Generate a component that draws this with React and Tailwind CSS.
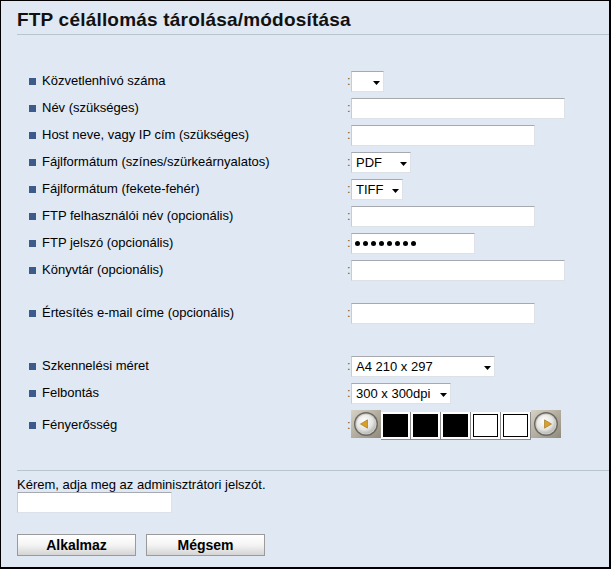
import React from 'react';

const Bullet = () => <span className="mt-[5px] w-[7px] h-[7px] shrink-0 bg-[#3c5a8a]" />;

const TextBox = ({ w, children }) => (
  <div
    className="mt-[3px] h-[21px] bg-white border border-[#dde2e8] border-t-[#a6a9ae] border-l-[#c9cdd2] flex items-center"
    style={{ width: w }}
  >
    {children}
  </div>
);

const Select = ({ w, value }) => (
  <div
    className="mt-[3px] h-[21px] bg-white border border-[#dde2e8] border-t-[#a6a9ae] border-l-[#c9cdd2] flex items-center justify-between pl-[4px] pr-[3px] text-[13px] leading-[19px]"
    style={{ width: w }}
  >
    <span>{value}</span>
    <svg width="7" height="4" viewBox="0 0 7 4" className="mt-[2px]">
      <path d="M0 0 H7 L3.5 4 Z" fill="#000" />
    </svg>
  </div>
);

const Password = () => (
  <TextBox w={124}>
    <div className="flex gap-[3px] pl-[3px]">
      {[0, 1, 2, 3, 4, 5, 6, 7].map(i => (
        <span key={i} className="w-[5px] h-[5px] rounded-full bg-black" />
      ))}
    </div>
  </TextBox>
);

const ArrowButton = ({ dir, id }) => (
  <svg width="30" height="28" viewBox="0 0 30 28" className="shrink-0">
    <defs>
      <linearGradient id={`bg-${id}`} x1="0" y1="0" x2="1" y2="1">
        <stop offset="0" stopColor="#d6d2c6" />
        <stop offset="0.5" stopColor="#b3ae9f" />
        <stop offset="1" stopColor="#8f8a7c" />
      </linearGradient>
      <radialGradient id={`kn-${id}`} cx="0.4" cy="0.35" r="0.75">
        <stop offset="0" stopColor="#ffffff" />
        <stop offset="0.6" stopColor="#e4e4e2" />
        <stop offset="1" stopColor="#a9a8a4" />
      </radialGradient>
    </defs>
    <rect width="30" height="28" fill={`url(#bg-${id})`} />
    <circle cx="15" cy="14" r="12" fill="#6a6862" />
    <circle cx="15" cy="14" r="10.6" fill="#cfcdc7" />
    <circle cx="15" cy="14" r="9.4" fill={`url(#kn-${id})`} />
    {dir === 'left' ? (
      <path d="M9.5 14 L16.5 9.8 L16.5 18.2 Z" fill="#d8a22a" stroke="#9c6d12" strokeWidth="0.6" />
    ) : (
      <path d="M20.5 14 L13.5 9.8 L13.5 18.2 Z" fill="#d8a22a" stroke="#9c6d12" strokeWidth="0.6" />
    )}
  </svg>
);

const Level = ({ on }) => (
  <div className="mt-[2px] w-[30px] h-[28px] bg-white border-r border-b border-[#8c8c8c] pl-[1.5px] pt-[1.5px]">
    {on ? (
      <div className="w-[25px] h-[23px] bg-black" />
    ) : (
      <div className="w-[25px] h-[23px] bg-white border border-black" />
    )}
  </div>
);

const Brightness = () => (
  <div className="flex mt-[3px]">
    <ArrowButton dir="left" id="l" />
    <Level on />
    <Level on />
    <Level on />
    <Level />
    <Level />
    <ArrowButton dir="right" id="r" />
  </div>
);

const rows = [
  { label: 'Közvetlenhívó száma', field: <Select w={33} value="" /> },
  { label: 'Név (szükséges)', field: <TextBox w={214} /> },
  { label: 'Host neve, vagy IP cím (szükséges)', field: <TextBox w={184} /> },
  { label: 'Fájlformátum (színes/szürkeárnyalatos)', field: <Select w={60} value="PDF" /> },
  { label: 'Fájlformátum (fekete-fehér)', field: <Select w={52} value="TIFF" /> },
  { label: 'FTP felhasználói név (opcionális)', field: <TextBox w={184} /> },
  { label: 'FTP jelszó (opcionális)', field: <Password /> },
  { label: 'Könyvtár (opcionális)', field: <TextBox w={214} /> },
  { label: 'Értesítés e-mail címe (opcionális)', field: <TextBox w={184} />, gap: 'mt-[16px]' },
  { label: 'Szkennelési méret', field: <Select w={144} value="A4 210 x 297" />, gap: 'mt-[26px]' },
  { label: 'Felbontás', field: <Select w={100} value="300 x 300dpi" /> },
];

const Row = ({ label, field, gap = '', tall }) => (
  <div className={`flex ${tall ? 'h-[34px]' : 'h-[27px]'} ${gap}`}>
    <div className={`w-[346px] pl-[28px] flex items-start ${tall ? 'pt-[10px]' : 'pt-[5px]'} leading-[15px]`}>
      <Bullet />
      <span className="ml-[6px] whitespace-nowrap">{label}</span>
    </div>
    <div className={`w-[4px] ${tall ? 'pt-[10px]' : 'pt-[5px]'} leading-[15px] text-[#6e5c2c]`}>:</div>
    {field}
  </div>
);

export default function App() {
  return (
    <div className="w-[611px] h-[569px] bg-[#dfe8f3] border-t border-l border-r-2 border-b-2 border-black flex flex-col font-['Liberation_Sans',Arial,sans-serif] text-[13px] text-black overflow-hidden">
      <div className="ml-[16px] h-[34px] pt-[8px] border-b border-[#b8c5d0]">
        <h1 className="text-[19px] leading-[22px] font-bold tracking-[0.2px] text-[#111]">FTP célállomás tárolása/módosítása</h1>
      </div>

      <div className="mt-[33px] flex flex-col">
        {rows.map(r => (
          <Row key={r.label} {...r} />
        ))}
        <Row label="Fényerősség" field={<Brightness />} tall />
      </div>

      <div className="ml-[16px] mt-[29px] border-t border-[#b8c5d0] pt-[6px]">
        <p className="leading-[15px]">Kérem, adja meg az adminisztrátori jelszót.</p>
        <div className="w-[155px] h-[21px] bg-white border border-[#dde2e8] border-t-[#a6a9ae] border-l-[#c9cdd2]" />
        <div className="flex gap-[10px] mt-[21px]">
          <button className="w-[119px] h-[22px] border border-[#9a9a9a] bg-gradient-to-b from-white via-[#f4f4f4] to-[#d4d4d4] font-bold text-[14px] leading-[20px]">
            Alkalmaz
          </button>
          <button className="w-[119px] h-[22px] border border-[#9a9a9a] bg-gradient-to-b from-white via-[#f4f4f4] to-[#d4d4d4] font-bold text-[14px] leading-[20px]">
            Mégsem
          </button>
        </div>
      </div>
    </div>
  );
}
